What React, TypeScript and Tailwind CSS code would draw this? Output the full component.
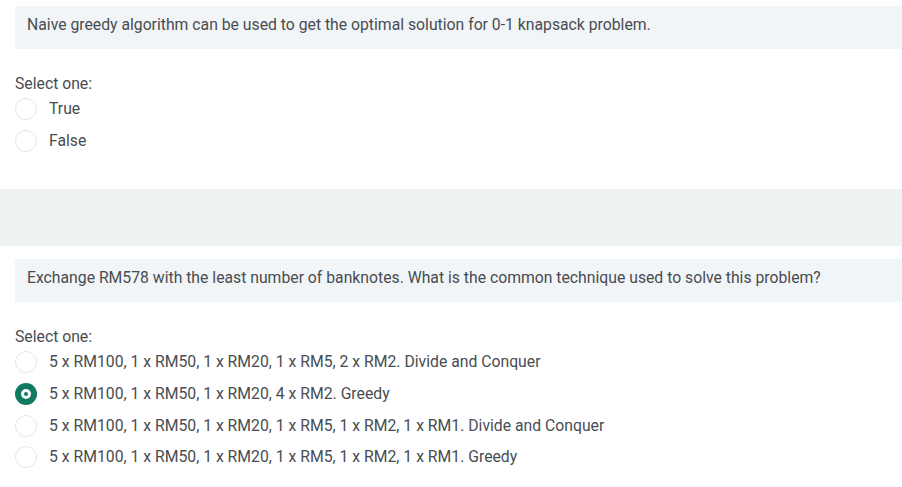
import React from 'react'

const font = { fontFamily: 'Roboto, "Liberation Sans", sans-serif' }

interface Opt {
  label: string
  checked?: boolean
}

function Radio({ checked }: { checked?: boolean }) {
  if (checked) {
    return (
      <span className="flex h-[22px] w-[22px] shrink-0 items-center justify-center rounded-full bg-[#0f7a5f]">
        <span className="flex h-[10px] w-[10px] items-center justify-center rounded-full bg-white">
          <span className="h-[4px] w-[4px] rounded-full bg-[#0f7a5f]" />
        </span>
      </span>
    )
  }
  return <span className="h-[22px] w-[22px] shrink-0 rounded-full border border-[#e4e6e8] bg-white" />
}

function Question({ text, options, top }: { text: string; options: Opt[]; top: string }) {
  return (
    <div className={top}>
      <div className="ml-[15px] h-[43px] bg-[#f2f5f8] pl-[12px] pt-[7px] text-[15.75px] leading-[24px] text-[#484c51]">
        {text}
      </div>
      <div className="ml-[15px] mt-[26px] text-[15.75px] leading-[18px] text-[#484c51]">Select one:</div>
      <div className="ml-[15px] flex flex-col">
        {options.map((o, i) => (
          <label key={i} className="flex h-[31.7px] items-center gap-[12px] text-[15.75px] text-[#484c51]">
            <Radio checked={o.checked} />
            <span>{o.label}</span>
          </label>
        ))}
      </div>
    </div>
  )
}

export default function App() {
  return (
    <div className="h-[487px] w-[902px] overflow-hidden bg-white" style={font}>
      <Question
        top="pt-[6px]"
        text="Naive greedy algorithm can be used to get the optimal solution for 0-1 knapsack problem."
        options={[{ label: 'True' }, { label: 'False' }]}
      />
      <div className="mt-[33px] h-[57px] bg-[#eff2f3]" />
      <Question
        top="pt-[13px]"
        text="Exchange RM578 with the least number of banknotes. What is the common technique used to solve this problem?"
        options={[
          { label: '5 x RM100, 1 x RM50, 1 x RM20, 1 x RM5, 2 x RM2. Divide and Conquer' },
          { label: '5 x RM100, 1 x RM50, 1 x RM20, 4 x RM2. Greedy', checked: true },
          { label: '5 x RM100, 1 x RM50, 1 x RM20, 1 x RM5, 1 x RM2, 1 x RM1. Divide and Conquer' },
          { label: '5 x RM100, 1 x RM50, 1 x RM20, 1 x RM5, 1 x RM2, 1 x RM1. Greedy' },
        ]}
      />
    </div>
  )
}
